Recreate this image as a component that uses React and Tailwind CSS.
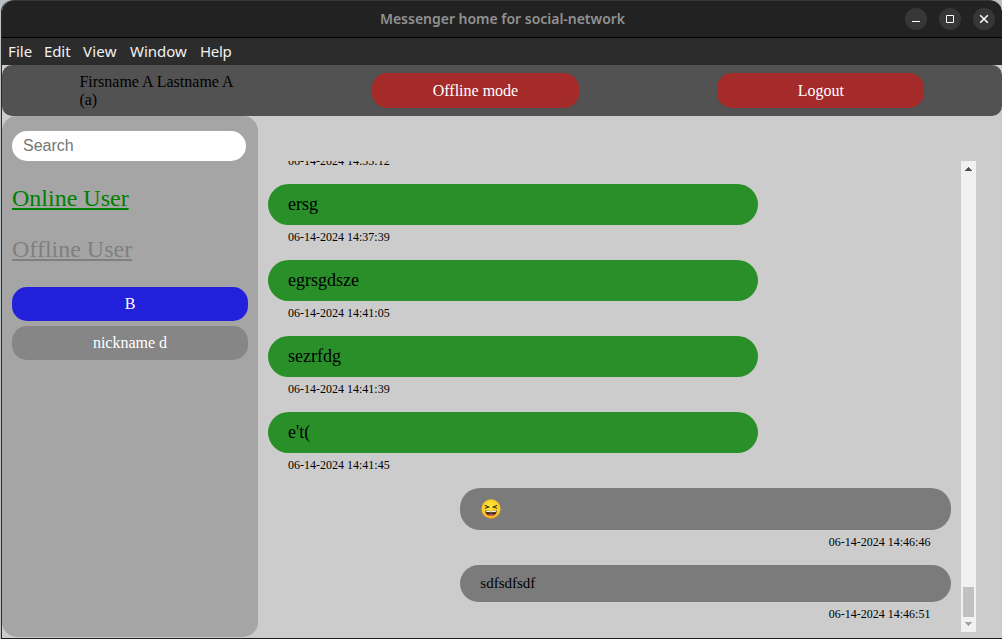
import React from "react";

const MENU = [
  { label: "File", box: "w-[36px]", spacing: "tracking-[0.1px]" },
  { label: "Edit", box: "w-[39px]", spacing: "tracking-[-0.1px]" },
  { label: "View", box: "w-[47px]", spacing: "tracking-[0.2px]" },
  { label: "Window", box: "w-[70px]", spacing: "tracking-[0px]" },
  { label: "Help", box: "w-[40px]", spacing: "tracking-[-0.3px]" },
];

const RECEIVED = [
  { text: "ersg", time: "06-14-2024 14:37:39" },
  { text: "egrsgdsze", time: "06-14-2024 14:41:05" },
  { text: "sezrfdg", time: "06-14-2024 14:41:39" },
  { text: "e't(", time: "06-14-2024 14:41:45" },
];

function LaughingFace() {
  return (
    <svg width="20" height="20" viewBox="0 0 20 20" fill="none" role="img" aria-label="laughing">
      <defs>
        <radialGradient id="face" cx="50%" cy="45%" r="52%">
          <stop offset="0.5" stopColor="#fde030" />
          <stop offset="0.88" stopColor="#f9c52b" />
          <stop offset="1" stopColor="#f0a01e" />
        </radialGradient>
      </defs>
      <circle cx="10" cy="10" r="9.7" fill="url(#face)" />
      <path d="M4.2 6.5L8 8L4.2 9.2M15.8 6.5L12 8L15.8 9.2" stroke="#3f2d20" strokeWidth="1.1" strokeLinecap="round" strokeLinejoin="round" />
      <path d="M4 11.2Q10 12.6 16 11.2Q15.6 16.8 10 16.8Q4.4 16.8 4 11.2Z" fill="#4a2f20" />
      <path d="M4.6 11.6Q10 12.8 15.4 11.6L15.1 12.7Q10 13.6 4.9 12.7Z" fill="#fff" />
      <path d="M6.6 15.8Q10 14 13.4 15.8Q12.3 16.8 10 16.8Q7.7 16.8 6.6 15.8Z" fill="#ee5260" />
    </svg>
  );
}

function WindowButton({ children }) {
  return (
    <button className="flex size-[22px] items-center justify-center rounded-full bg-[#373737]">
      <svg width="22" height="22" viewBox="0 0 22 22" fill="none" stroke="#fff">
        {children}
      </svg>
    </button>
  );
}

function TitleBar() {
  return (
    <header className="grid h-[38px] shrink-0 grid-cols-[1fr_auto_1fr] items-center rounded-t-[12px] border-t border-b border-t-[#383838] border-b-black bg-[#222222] pr-[7px] pl-[8px]">
      <span />
      <h1 className="w-[246px] text-center font-['Noto_Sans',sans-serif] text-[14px] leading-[20px] font-semibold tracking-[-0.02px] whitespace-nowrap text-[#919191]">
        Messenger home for social-network
      </h1>
      <div className="flex justify-end gap-[12px]">
        <WindowButton><path d="M7 13.5H15" /></WindowButton>
        <WindowButton><path d="M7.5 7.5H14.5V14.5H7.5Z" /></WindowButton>
        <WindowButton><path d="M7.2 7.2L14.8 14.8M14.8 7.2L7.2 14.8" strokeWidth="1.5" /></WindowButton>
      </div>
    </header>
  );
}

function MenuBar() {
  return (
    <nav className="flex h-[27px] shrink-0 items-center bg-[#2c2c2c] pb-[2px] pl-[6px] font-['Noto_Sans',sans-serif] text-[15px] leading-[20px] text-[#f2f2f2]">
      {MENU.map((m) => (
        <span key={m.label} className={`${m.box} ${m.spacing}`}>{m.label}</span>
      ))}
    </nav>
  );
}

function Sidebar() {
  return (
    <aside className="flex h-[521px] w-[256px] shrink-0 flex-col rounded-[15px] bg-[#a5a5a5] px-[10px] pt-[15px]">
      <input
        placeholder="Search"
        className="h-[30px] w-[234px] rounded-[15px] bg-white px-[11px] font-['Liberation_Sans',sans-serif] text-[16px] placeholder:text-[#757575]"
      />
      <h2 className="mt-[24px] text-[24px] leading-[27px] text-[#008000] underline">Online User</h2>
      <h2 className="mt-[24px] text-[24px] leading-[27px] text-[#808080] underline">Offline User</h2>
      <div className="mt-[24px] flex flex-col gap-[5px] text-center text-[16px] leading-[34px] text-white">
        <div className="h-[34px] rounded-[15px] bg-[#2320dc]">B</div>
        <div className="h-[34px] rounded-[15px] bg-[#868686]">nickname d</div>
      </div>
    </aside>
  );
}

function Scrollbar() {
  return (
    <div className="flex h-[471px] w-[15px] shrink-0 flex-col items-center bg-[#f1f1f1]">
      <svg width="15" height="15" viewBox="0 0 15 15" shapeRendering="crispEdges">
        <path d="M7 6h1v1h1v1h1v1h1v1H4V9h1V8h1V7h1z" fill="#505050" />
      </svg>
      <div className="mt-[411px] h-[30px] w-[11px] bg-[#c1c1c1]" />
      <svg width="15" height="15" viewBox="0 0 15 15" shapeRendering="crispEdges">
        <path d="M4 5h7v1h-1v1h-1v1h-1v1H7V8H6V7H5V6H4z" fill="#a3a3a3" />
      </svg>
    </div>
  );
}

function Sent({ children, time, size }) {
  return (
    <div className="ml-[192px] w-[491px]">
      <div className={`flex items-center rounded-[20px] bg-[#7b7b7b] px-[20px] ${size}`}>{children}</div>
      <p className="mt-[5px] mb-[16px] pr-[20.6px] text-right text-[12px] leading-[14px]">{time}</p>
    </div>
  );
}

function Chat() {
  return (
    <main className="flex pt-[45px] pl-[10px]">
      <div className="h-[471px] w-[693px] overflow-hidden">
        <p className="-mt-[7px] mb-[16px] pl-[20px] text-[12px] leading-[14px]">06-14-2024 14:35:12</p>
        {RECEIVED.map((m) => (
          <div key={m.time} className="w-[490px]">
            <div className="h-[41px] rounded-[20.5px] bg-[#298f29] px-[20px] text-[18px] leading-[41px]">{m.text}</div>
            <p className="mt-[5px] mb-[16px] pl-[20px] text-[12px] leading-[14px]">{m.time}</p>
          </div>
        ))}
        <Sent time="06-14-2024 14:46:46" size="h-[42px]">
          <span className="pl-[1px]"><LaughingFace /></span>
        </Sent>
        <Sent time="06-14-2024 14:46:51" size="h-[37px] text-[15px] leading-[17px]">
          <span className="pl-[0.3px]">sdfsdfsdf</span>
        </Sent>
      </div>
      <Scrollbar />
    </main>
  );
}

export default function App() {
  return (
    <div className="h-[639px] w-[1002px] overflow-hidden bg-[#b9c1c5] pl-[1px] font-['Liberation_Serif',serif] text-black">
      <div className="flex h-[639px] w-[1001px] flex-col overflow-hidden rounded-t-[12px] border-b border-l border-b-[#1c1c20] border-l-[#252d31] bg-[#cccccc]">
        <TitleBar />
        <MenuBar />
        <section className="flex h-[51px] shrink-0 items-center rounded-[10px] bg-[#525252] pl-[77.4px]">
          <p className="w-[207px] pr-[45px] text-[16px] leading-[18px]">Firsname A Lastname A (a)</p>
          <button className="ml-[85.6px] h-[35px] w-[207px] rounded-[15px] bg-[#a52a2a] text-[16px] text-white">Offline mode</button>
          <button className="ml-[138px] h-[35px] w-[207px] rounded-[15px] bg-[#a52a2a] pl-[0.5px] text-[16px] text-white">Logout</button>
        </section>
        <div className="flex">
          <Sidebar />
          <Chat />
        </div>
      </div>
    </div>
  );
}
